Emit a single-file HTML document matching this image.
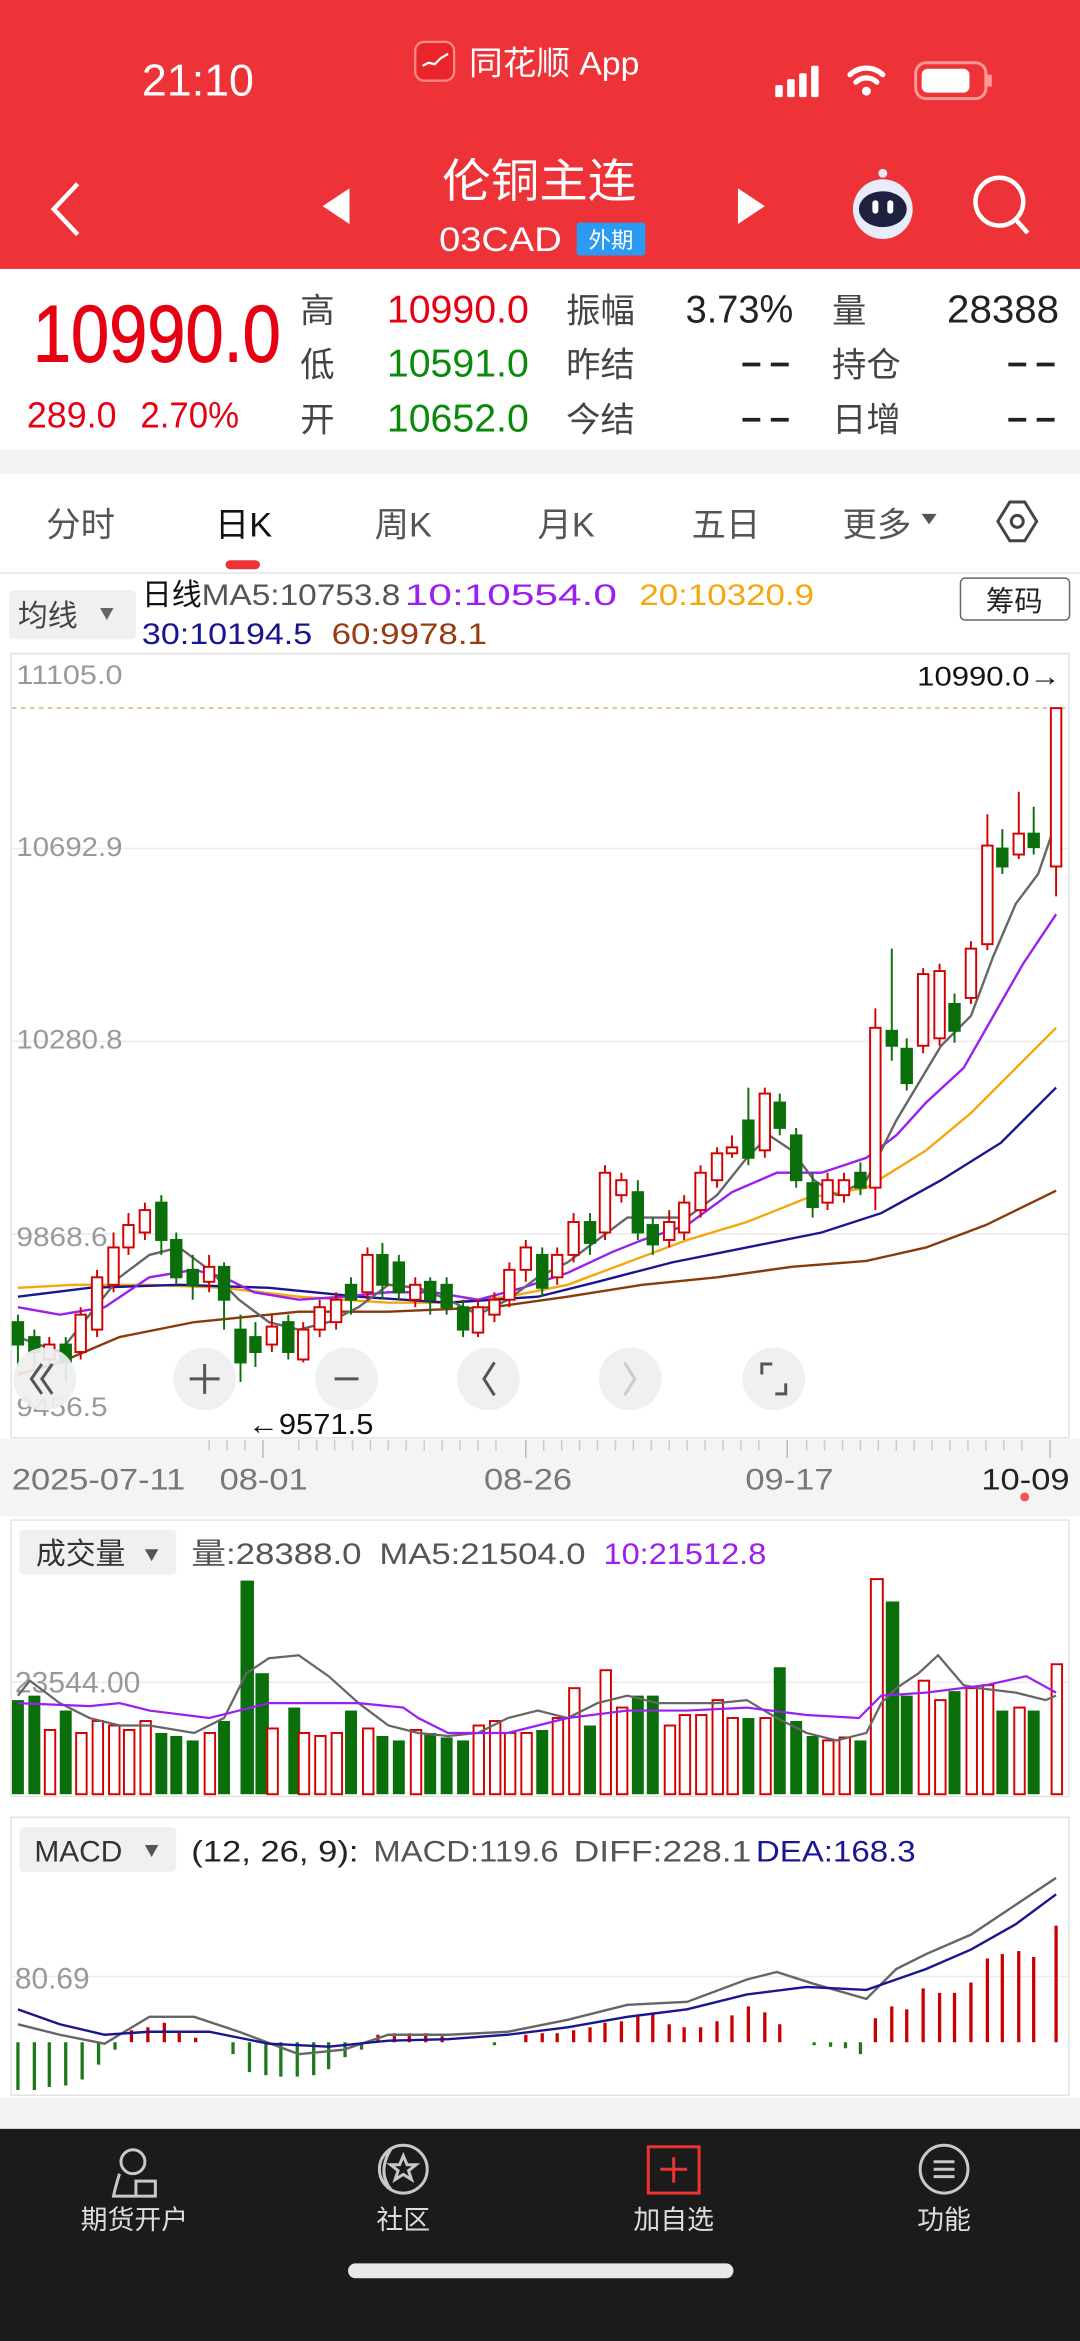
<!DOCTYPE html>
<html><head><meta charset="utf-8"><style>
html,body{margin:0;padding:0;background:#fff;}
svg{display:block}
text{font-family:"Liberation Sans","Noto Sans CJK SC",sans-serif;}
</style></head><body>
<svg width="1080" height="2341" viewBox="0 0 723 1567" preserveAspectRatio="none" xmlns="http://www.w3.org/2000/svg">
<!-- header -->
<rect x="0" y="0" width="723" height="180" fill="#ed3238"/>
<text x="95" y="64" font-size="30" fill="#fff" textLength="75" lengthAdjust="spacingAndGlyphs">21:10</text>
<rect x="278" y="28" width="26" height="26" rx="6" fill="#e8252b" stroke="#f88" stroke-width="1.5"/>
<path d="M283 44 l4 -2 l4 1 l4 -4 l5 -3" stroke="#fff" stroke-width="1.5" fill="none"/>
<text x="314" y="50" font-size="22" fill="#fff" textLength="114" lengthAdjust="spacingAndGlyphs">同花顺 App</text>
<g fill="#fff"><rect x="519" y="57" width="5" height="8" rx="1"/><rect x="527" y="53" width="5" height="12" rx="1"/><rect x="535" y="49" width="5" height="16" rx="1"/><rect x="543" y="44" width="5" height="21" rx="1"/></g>
<path d="M569 50 a16 16 0 0 1 22 0 M573 55 a10 10 0 0 1 14 0" stroke="#fff" stroke-width="3.5" fill="none" stroke-linecap="round"/><circle cx="580" cy="61" r="3" fill="#fff"/>
<rect x="613" y="42" width="47" height="24" rx="7" fill="none" stroke="#f99" stroke-width="2"/><rect x="617" y="46" width="32" height="16" rx="4" fill="#fff"/><rect x="661" y="50" width="3" height="8" fill="#f99"/>
<path d="M52 123 L36 140 L52 157" stroke="#fff" stroke-width="3" fill="none"/>
<path d="M234 126 L216 138 L234 150 Z" fill="#fff"/>
<path d="M494 126 L512 138 L494 150 Z" fill="#fff"/>
<text x="296" y="132" font-size="31" fill="#fff" textLength="130" lengthAdjust="spacingAndGlyphs">伦铜主连</text>
<text x="294" y="168" font-size="23" fill="#fff" textLength="82" lengthAdjust="spacingAndGlyphs">03CAD</text>
<rect x="386" y="149" width="46" height="22" rx="2" fill="#2b9af3"/>
<text x="409" y="166" font-size="15" fill="#fff" text-anchor="middle">外期</text>
<circle cx="591" cy="140" r="20" fill="#e8ecf8"/><ellipse cx="591" cy="140" rx="16" ry="12" fill="#1e2140"/><rect x="584" y="134" width="4" height="9" rx="2" fill="#fff"/><rect x="594" y="134" width="4" height="9" rx="2" fill="#fff"/><circle cx="591" cy="116" r="3" fill="#e8ecf8"/>
<circle cx="669" cy="135" r="16" stroke="#fff" stroke-width="3" fill="none"/><path d="M680 147 L688 156" stroke="#fff" stroke-width="3"/>
<!-- quote -->
<text x="22" y="242" font-size="54" fill="#e60012" textLength="166" lengthAdjust="spacingAndGlyphs" stroke="#e60012" stroke-width="0.6">10990.0</text>
<text x="18" y="286" font-size="24" fill="#e60012" textLength="60" lengthAdjust="spacingAndGlyphs">289.0</text>
<text x="94" y="286" font-size="24" fill="#e60012" textLength="66" lengthAdjust="spacingAndGlyphs">2.70%</text>
<g font-size="23" fill="#444">
<text x="201" y="216">高</text><text x="201" y="252">低</text><text x="201" y="289">开</text>
<text x="379" y="216">振幅</text><text x="379" y="252">昨结</text><text x="379" y="289">今结</text>
<text x="557" y="216">量</text><text x="557" y="252">持仓</text><text x="557" y="289">日增</text>
</g>
<g font-size="26" lengthAdjust="spacingAndGlyphs">
<text x="259" y="216" fill="#e60012" textLength="95" lengthAdjust="spacingAndGlyphs">10990.0</text><text x="259" y="252" fill="#0a8a0a" textLength="95" lengthAdjust="spacingAndGlyphs">10591.0</text><text x="259" y="289" fill="#0a8a0a" textLength="95" lengthAdjust="spacingAndGlyphs">10652.0</text>
<text x="459" y="216" fill="#222" textLength="72" lengthAdjust="spacingAndGlyphs">3.73%</text>
<text x="634" y="216" fill="#222" textLength="75" lengthAdjust="spacingAndGlyphs">28388</text>
</g>
<g stroke="#222" stroke-width="2.5"><path d="M497 244h12M516 244h12M497 281h12M516 281h12M675 244h12M694 244h12M675 281h12M694 281h12"/></g>
<rect x="0" y="301" width="723" height="16" fill="#f3f3f3"/>
<!-- tabs -->
<g font-size="23" fill="#555" text-anchor="middle">
<text x="54" y="359">分时</text><text x="163" y="359" fill="#111">日K</text><text x="270" y="359">周K</text><text x="379" y="359">月K</text><text x="486" y="359">五日</text><text x="587" y="359">更多</text>
</g>
<path d="M617 344 l10 0 l-5 7z" fill="#555"/>
<path d="M676 336 l10 0 l8 13 l-8 13 l-10 0 l-8 -13z" stroke="#444" stroke-width="2" fill="none"/><circle cx="681" cy="349" r="4" stroke="#444" stroke-width="2" fill="none"/>
<rect x="151" y="375" width="23" height="6" rx="3" fill="#ed3238"/>
<rect x="0" y="383" width="723" height="1" fill="#e6e6e6"/>
<!-- MA legend -->
<rect x="6" y="395" width="85" height="33" rx="3" fill="#f0f0f0"/>
<text x="12" y="419" font-size="20" fill="#444">均线</text><path d="M67 407 l9 0 l-4.5 8z" fill="#666"/>
<g font-size="20">
<text x="95" y="405" fill="#111">日线</text><text x="135" y="405" fill="#555" textLength="133" lengthAdjust="spacingAndGlyphs">MA5:10753.8</text><text x="271" y="405" fill="#9a1ff0" textLength="142" lengthAdjust="spacingAndGlyphs">10:10554.0</text><text x="428" y="405" fill="#f5a70c" textLength="117" lengthAdjust="spacingAndGlyphs">20:10320.9</text>
<text x="95" y="431" fill="#16148f" textLength="114" lengthAdjust="spacingAndGlyphs">30:10194.5</text><text x="222" y="431" fill="#9a3a10" textLength="104" lengthAdjust="spacingAndGlyphs">60:9978.1</text>
</g>
<rect x="643" y="387" width="73" height="28" rx="3" fill="#fff" stroke="#666"/><text x="679" y="409" font-size="19" fill="#222" text-anchor="middle">筹码</text>
<!-- chart frame -->
<rect x="7.5" y="437.5" width="708" height="525" fill="#fff" stroke="#e3e3e3"/>
<g stroke="#ececec"><line x1="8" y1="568" x2="715" y2="568"/><line x1="8" y1="697" x2="715" y2="697"/><line x1="8" y1="826" x2="715" y2="826"/></g>
<line x1="8" y1="474" x2="715" y2="474" stroke="#d9b27a" stroke-dasharray="3,3"/>
<g font-size="18" fill="#999"><text x="11" y="458" textLength="71" lengthAdjust="spacingAndGlyphs">11105.0</text><text x="11" y="573" textLength="71" lengthAdjust="spacingAndGlyphs">10692.9</text><text x="11" y="702" textLength="71" lengthAdjust="spacingAndGlyphs">10280.8</text><text x="11" y="834" textLength="61" lengthAdjust="spacingAndGlyphs">9868.6</text><text x="11" y="948" textLength="61" lengthAdjust="spacingAndGlyphs">9456.5</text></g>
<text x="614" y="459" font-size="18" fill="#111" textLength="96" lengthAdjust="spacingAndGlyphs">10990.0→</text>
<text x="166" y="960" font-size="19" fill="#111" textLength="84" lengthAdjust="spacingAndGlyphs">←9571.5</text>
<!-- MA lines -->
<g fill="none" stroke-width="1.6">
<polyline stroke="#8a3a0a" points="12,920 40,912 80,895 130,885 200,878 260,878 330,875 380,868 430,860 480,855 530,848 580,844 620,835 660,820 707,797"/>
<polyline stroke="#f5a70c" points="12,862 50,860 100,860 150,862 200,868 260,872 300,872 340,868 380,860 420,845 460,830 500,818 540,802 580,795 620,770 650,745 680,715 707,688"/>
<polyline stroke="#1a1590" points="12,868 60,862 120,860 180,862 240,868 300,872 360,868 400,858 450,845 500,835 550,825 590,812 630,790 670,765 707,728"/>
<polyline stroke="#9a1ff0" points="12,875 40,880 70,875 100,855 130,850 150,855 170,865 200,870 230,868 260,865 290,865 320,870 350,862 380,852 410,838 430,830 460,820 490,798 520,785 550,785 580,775 600,760 620,738 645,715 665,680 685,645 707,612"/>
<polyline stroke="#666" points="12,895 40,905 60,880 80,855 100,840 120,835 140,850 160,870 180,885 200,890 220,885 240,875 260,860 280,862 300,870 320,880 340,870 360,855 380,845 400,830 420,815 440,815 460,815 480,800 500,775 515,760 530,770 545,790 560,800 580,790 600,750 615,725 630,700 650,680 665,640 680,605 695,585 707,550"/>
</g>
<!-- green candles -->
<g fill="#0a6e0a" stroke="#0a6e0a" stroke-width="1.3">
<line x1="12" y1="880" x2="12" y2="915"/><rect x="8.5" y="885" width="7" height="15"/>
<line x1="23" y1="890" x2="23" y2="915"/><rect x="19.5" y="895" width="7" height="10"/>
<line x1="44" y1="895" x2="44" y2="925"/><rect x="40.5" y="900" width="7" height="12"/>
<line x1="108" y1="800" x2="108" y2="840"/><rect x="104.5" y="805" width="7" height="25"/>
<line x1="118" y1="825" x2="118" y2="860"/><rect x="114.5" y="830" width="7" height="25"/>
<line x1="129" y1="840" x2="129" y2="870"/><rect x="125.5" y="850" width="7" height="10"/>
<line x1="150" y1="845" x2="150" y2="890"/><rect x="146.5" y="848" width="7" height="22"/>
<line x1="161" y1="880" x2="161" y2="925"/><rect x="157.5" y="890" width="7" height="22"/>
<line x1="171" y1="885" x2="171" y2="915"/><rect x="167.5" y="895" width="7" height="10"/>
<line x1="193" y1="880" x2="193" y2="910"/><rect x="189.5" y="885" width="7" height="20"/>
<line x1="235" y1="855" x2="235" y2="880"/><rect x="231.5" y="860" width="7" height="10"/>
<line x1="256" y1="832" x2="256" y2="870"/><rect x="252.5" y="840" width="7" height="20"/>
<line x1="267" y1="840" x2="267" y2="870"/><rect x="263.5" y="845" width="7" height="20"/>
<line x1="288" y1="855" x2="288" y2="880"/><rect x="284.5" y="858" width="7" height="12"/>
<line x1="299" y1="855" x2="299" y2="880"/><rect x="295.5" y="860" width="7" height="15"/>
<line x1="310" y1="870" x2="310" y2="895"/><rect x="306.5" y="875" width="7" height="15"/>
<line x1="363" y1="835" x2="363" y2="868"/><rect x="359.5" y="840" width="7" height="22"/>
<line x1="395" y1="812" x2="395" y2="840"/><rect x="391.5" y="818" width="7" height="14"/>
<line x1="427" y1="790" x2="427" y2="830"/><rect x="423.5" y="798" width="7" height="27"/>
<line x1="437" y1="815" x2="437" y2="840"/><rect x="433.5" y="820" width="7" height="13"/>
<line x1="501" y1="728" x2="501" y2="780"/><rect x="497.5" y="750" width="7" height="25"/>
<line x1="522" y1="732" x2="522" y2="760"/><rect x="518.5" y="738" width="7" height="17"/>
<line x1="533" y1="755" x2="533" y2="795"/><rect x="529.5" y="760" width="7" height="30"/>
<line x1="544" y1="785" x2="544" y2="815"/><rect x="540.5" y="792" width="7" height="16"/>
<line x1="576" y1="778" x2="576" y2="800"/><rect x="572.5" y="785" width="7" height="10"/>
<line x1="597" y1="635" x2="597" y2="710"/><rect x="593.5" y="690" width="7" height="10"/>
<line x1="607" y1="695" x2="607" y2="730"/><rect x="603.5" y="702" width="7" height="23"/>
<line x1="639" y1="665" x2="639" y2="698"/><rect x="635.5" y="672" width="7" height="18"/>
<line x1="671" y1="555" x2="671" y2="585"/><rect x="667.5" y="568" width="7" height="12"/>
<line x1="692" y1="540" x2="692" y2="572"/><rect x="688.5" y="558" width="7" height="9"/>
</g>
<!-- red candles -->
<g fill="#fff" stroke="#d40000" stroke-width="1.3">
<line x1="33" y1="895" x2="33" y2="918"/><rect x="29.5" y="900" width="7" height="10"/>
<line x1="54" y1="875" x2="54" y2="910"/><rect x="50.5" y="880" width="7" height="25"/>
<line x1="65" y1="850" x2="65" y2="895"/><rect x="61.5" y="855" width="7" height="35"/>
<line x1="76" y1="825" x2="76" y2="865"/><rect x="72.5" y="835" width="7" height="25"/>
<line x1="86" y1="812" x2="86" y2="840"/><rect x="82.5" y="820" width="7" height="15"/>
<line x1="97" y1="805" x2="97" y2="830"/><rect x="93.5" y="810" width="7" height="15"/>
<line x1="140" y1="840" x2="140" y2="865"/><rect x="136.5" y="848" width="7" height="10"/>
<line x1="182" y1="880" x2="182" y2="905"/><rect x="178.5" y="888" width="7" height="12"/>
<line x1="203" y1="885" x2="203" y2="912"/><rect x="199.5" y="890" width="7" height="20"/>
<line x1="214" y1="870" x2="214" y2="895"/><rect x="210.5" y="875" width="7" height="15"/>
<line x1="225" y1="865" x2="225" y2="890"/><rect x="221.5" y="870" width="7" height="15"/>
<line x1="246" y1="835" x2="246" y2="870"/><rect x="242.5" y="840" width="7" height="25"/>
<line x1="278" y1="855" x2="278" y2="875"/><rect x="274.5" y="860" width="7" height="10"/>
<line x1="320" y1="870" x2="320" y2="895"/><rect x="316.5" y="875" width="7" height="17"/>
<line x1="331" y1="865" x2="331" y2="885"/><rect x="327.5" y="870" width="7" height="10"/>
<line x1="341" y1="845" x2="341" y2="875"/><rect x="337.5" y="850" width="7" height="20"/>
<line x1="352" y1="830" x2="352" y2="858"/><rect x="348.5" y="835" width="7" height="15"/>
<line x1="373" y1="835" x2="373" y2="860"/><rect x="369.5" y="840" width="7" height="15"/>
<line x1="384" y1="812" x2="384" y2="845"/><rect x="380.5" y="818" width="7" height="22"/>
<line x1="405" y1="780" x2="405" y2="830"/><rect x="401.5" y="785" width="7" height="40"/>
<line x1="416" y1="785" x2="416" y2="805"/><rect x="412.5" y="790" width="7" height="10"/>
<line x1="448" y1="810" x2="448" y2="835"/><rect x="444.5" y="818" width="7" height="12"/>
<line x1="458" y1="800" x2="458" y2="830"/><rect x="454.5" y="805" width="7" height="20"/>
<line x1="469" y1="780" x2="469" y2="815"/><rect x="465.5" y="785" width="7" height="25"/>
<line x1="480" y1="768" x2="480" y2="795"/><rect x="476.5" y="772" width="7" height="18"/>
<line x1="490" y1="760" x2="490" y2="775"/><rect x="486.5" y="768" width="7" height="4"/>
<line x1="512" y1="728" x2="512" y2="775"/><rect x="508.5" y="732" width="7" height="38"/>
<line x1="554" y1="785" x2="554" y2="810"/><rect x="550.5" y="790" width="7" height="15"/>
<line x1="565" y1="785" x2="565" y2="805"/><rect x="561.5" y="790" width="7" height="10"/>
<line x1="586" y1="675" x2="586" y2="810"/><rect x="582.5" y="688" width="7" height="107"/>
<line x1="618" y1="648" x2="618" y2="705"/><rect x="614.5" y="652" width="7" height="48"/>
<line x1="629" y1="645" x2="629" y2="700"/><rect x="625.5" y="650" width="7" height="45"/>
<line x1="650" y1="630" x2="650" y2="672"/><rect x="646.5" y="635" width="7" height="33"/>
<line x1="661" y1="545" x2="661" y2="636"/><rect x="657.5" y="566" width="7" height="66"/>
<line x1="682" y1="530" x2="682" y2="575"/><rect x="678.5" y="558" width="7" height="14"/>
<line x1="707" y1="474" x2="707" y2="600"/><rect x="703.5" y="474" width="7" height="106"/>
</g>
<!-- zoom controls -->
<g fill="#efefef" opacity="0.92"><circle cx="30" cy="923" r="21"/><circle cx="137" cy="923" r="21"/><circle cx="232" cy="923" r="21"/><circle cx="327" cy="923" r="21"/><circle cx="422" cy="923" r="21"/><circle cx="518" cy="923" r="21"/></g>
<g stroke="#555" stroke-width="2" fill="none">
<path d="M28 913 l-7 10 l7 10 M35 913 l-7 10 l7 10"/>
<path d="M127 923 h20 M137 913 v20"/><path d="M224 923 h16"/><path d="M331 912 l-7 11 l7 11"/>
<path d="M418 912 l7 11 l-7 11" stroke="#ccc"/><path d="M510 920 v-7 h7 M526 926 v7 h-7"/>
</g>
<!-- x axis -->
<rect x="0" y="963" width="723" height="52" fill="#f4f4f4"/>
<g stroke="#bbb"><line x1="176" y1="964" x2="176" y2="976"/><line x1="352" y1="964" x2="352" y2="976"/><line x1="527" y1="964" x2="527" y2="976"/><line x1="703" y1="964" x2="703" y2="976"/></g>
<g stroke="#ccc"><path d="M200 964v7M212 964v7M224 964v7M236 964v7M248 964v7M260 964v7M272 964v7M284 964v7M296 964v7M308 964v7M320 964v7M332 964v7M364 964v7M376 964v7M388 964v7M400 964v7M412 964v7M424 964v7M436 964v7M448 964v7M460 964v7M472 964v7M484 964v7M496 964v7M508 964v7M540 964v7M552 964v7M564 964v7M576 964v7M588 964v7M600 964v7M612 964v7M624 964v7M636 964v7M648 964v7M660 964v7M672 964v7M684 964v7M140 964v7M152 964v7M164 964v7"/></g>
<g font-size="20" fill="#777" lengthAdjust="spacingAndGlyphs"><text x="8" y="997" textLength="116" lengthAdjust="spacingAndGlyphs">2025-07-11</text><text x="147" y="997" textLength="59" lengthAdjust="spacingAndGlyphs">08-01</text><text x="324" y="997" textLength="59" lengthAdjust="spacingAndGlyphs">08-26</text><text x="499" y="997" textLength="59" lengthAdjust="spacingAndGlyphs">09-17</text><text x="657" y="997" fill="#222" textLength="59" lengthAdjust="spacingAndGlyphs">10-09</text></g>
<circle cx="686" cy="1002" r="3" fill="#f25555"/>
<!-- volume panel -->
<rect x="7.5" y="1017.5" width="708" height="185" fill="#fff" stroke="#e3e3e3"/>
<rect x="13" y="1024" width="105" height="30" rx="3" fill="#f0f0f0"/>
<text x="24" y="1047" font-size="20" fill="#333">成交量</text><path d="M97 1037 l9 0 l-4.5 8z" fill="#555"/>
<g font-size="20"><text x="128" y="1047" fill="#555" textLength="114" lengthAdjust="spacingAndGlyphs">量:28388.0</text><text x="254" y="1047" fill="#555" textLength="138" lengthAdjust="spacingAndGlyphs">MA5:21504.0</text><text x="404" y="1047" fill="#9a1ff0" textLength="109" lengthAdjust="spacingAndGlyphs">10:21512.8</text></g>
<line x1="8" y1="1126" x2="715" y2="1126" stroke="#ececec"/>
<text x="10" y="1133" font-size="20" fill="#999" textLength="84" lengthAdjust="spacingAndGlyphs">23544.00</text>
<g fill="#0a6e0a">
<rect x="8" y="1138" width="8" height="63"/><rect x="19" y="1135" width="8" height="66"/><rect x="40" y="1145" width="8" height="56"/><rect x="104" y="1160" width="8" height="41"/><rect x="114" y="1162" width="8" height="39"/><rect x="125" y="1165" width="8" height="36"/><rect x="146" y="1152" width="8" height="49"/><rect x="161" y="1058" width="9" height="143"/><rect x="171" y="1120" width="9" height="81"/><rect x="193" y="1143" width="8" height="58"/><rect x="231" y="1145" width="8" height="56"/><rect x="252" y="1162" width="8" height="39"/><rect x="263" y="1165" width="8" height="36"/><rect x="284" y="1160" width="8" height="41"/><rect x="295" y="1163" width="8" height="38"/><rect x="306" y="1165" width="8" height="36"/><rect x="359" y="1158" width="8" height="43"/><rect x="391" y="1155" width="8" height="46"/><rect x="423" y="1135" width="8" height="66"/><rect x="433" y="1135" width="8" height="66"/><rect x="497" y="1150" width="8" height="51"/><rect x="518" y="1116" width="8" height="85"/><rect x="529" y="1152" width="8" height="49"/><rect x="540" y="1162" width="8" height="39"/><rect x="572" y="1165" width="8" height="36"/><rect x="593" y="1072" width="9" height="129"/><rect x="603" y="1135" width="8" height="66"/><rect x="635" y="1132" width="8" height="69"/><rect x="667" y="1145" width="8" height="56"/><rect x="688" y="1145" width="8" height="56"/>
</g>
<g fill="#fff" stroke="#d40000" stroke-width="1.3">
<rect x="30" y="1158" width="7" height="43"/><rect x="51" y="1160" width="7" height="41"/><rect x="62" y="1152" width="7" height="49"/><rect x="73" y="1155" width="7" height="46"/><rect x="83" y="1158" width="7" height="43"/><rect x="94" y="1152" width="7" height="49"/><rect x="137" y="1160" width="7" height="41"/><rect x="179" y="1157" width="7" height="44"/><rect x="200" y="1160" width="7" height="41"/><rect x="211" y="1162" width="7" height="39"/><rect x="222" y="1160" width="7" height="41"/><rect x="243" y="1157" width="7" height="44"/><rect x="275" y="1158" width="7" height="43"/><rect x="317" y="1155" width="7" height="46"/><rect x="328" y="1152" width="7" height="49"/><rect x="338" y="1160" width="7" height="41"/><rect x="349" y="1160" width="7" height="41"/><rect x="370" y="1150" width="7" height="51"/><rect x="381" y="1130" width="7" height="71"/><rect x="402" y="1118" width="7" height="83"/><rect x="413" y="1143" width="7" height="58"/><rect x="445" y="1155" width="7" height="46"/><rect x="455" y="1148" width="7" height="53"/><rect x="466" y="1148" width="7" height="53"/><rect x="477" y="1138" width="7" height="63"/><rect x="487" y="1150" width="7" height="51"/><rect x="509" y="1150" width="7" height="51"/><rect x="551" y="1165" width="7" height="36"/><rect x="562" y="1163" width="7" height="38"/><rect x="583" y="1057" width="8" height="144"/><rect x="615" y="1125" width="7" height="76"/><rect x="626" y="1138" width="7" height="63"/><rect x="647" y="1130" width="7" height="71"/><rect x="658" y="1128" width="7" height="73"/><rect x="679" y="1143" width="7" height="58"/><rect x="704" y="1114" width="7" height="87"/>
</g>
<g fill="none" stroke-width="1.5">
<polyline stroke="#666" points="12,1135 20,1125 40,1140 60,1150 80,1155 100,1155 130,1160 150,1150 165,1120 180,1110 200,1108 220,1122 240,1140 260,1155 280,1160 300,1162 320,1160 340,1150 360,1145 380,1150 400,1140 420,1135 440,1140 460,1140 480,1140 500,1138 520,1150 540,1160 560,1165 580,1160 590,1140 600,1130 615,1120 628,1108 645,1128 655,1130 680,1133 700,1138 707,1135"/>
<polyline stroke="#9a1ff0" points="12,1140 60,1142 80,1140 100,1145 140,1150 160,1145 180,1140 240,1140 270,1143 280,1150 300,1160 340,1160 380,1150 420,1145 460,1145 500,1143 540,1148 575,1150 590,1135 620,1133 660,1128 687,1122 707,1133"/>
</g>
<!-- MACD panel -->
<rect x="7.5" y="1216.5" width="708" height="186" fill="#fff" stroke="#e3e3e3"/>
<rect x="13" y="1223" width="105" height="30" rx="3" fill="#f0f0f0"/>
<text x="23" y="1246" font-size="20" fill="#333">MACD</text><path d="M97 1235 l9 0 l-4.5 8z" fill="#555"/>
<g font-size="20"><text x="128" y="1246" fill="#222" textLength="112" lengthAdjust="spacingAndGlyphs">(12, 26, 9):</text><text x="250" y="1246" fill="#555" textLength="124" lengthAdjust="spacingAndGlyphs">MACD:119.6</text><text x="384" y="1246" fill="#555" textLength="119" lengthAdjust="spacingAndGlyphs">DIFF:228.1</text><text x="506" y="1246" fill="#1a1590" textLength="107" lengthAdjust="spacingAndGlyphs">DEA:168.3</text></g>
<line x1="8" y1="1323" x2="715" y2="1323" stroke="#ececec"/>
<text x="10" y="1331" font-size="20" fill="#999" textLength="50" lengthAdjust="spacingAndGlyphs">80.69</text>
<g stroke="#1a7a1a" stroke-width="2.2">
<path d="M12 1367v32M23 1367v32M33 1367v30M44 1367v29M55 1367v25M66 1367v15M77 1367v5M156 1367v8M167 1367v20M178 1367v22M188 1367v23M199 1367v23M210 1367v22M220 1367v18M231 1367v10M242 1367v5M331 1367v2M545 1367v2M556 1367v3M566 1367v4M576 1367v8"/>
</g>
<g stroke="#c80000" stroke-width="2.2">
<path d="M88 1367v-8M99 1367v-10M110 1367v-13M120 1367v-7M131 1367v-3M253 1367v-5M264 1367v-6M274 1367v-6M285 1367v-6M296 1367v-4M352 1367v-5M363 1367v-6M373 1367v-6M384 1367v-8M395 1367v-10M405 1367v-13M416 1367v-14M427 1367v-18M437 1367v-20M448 1367v-12M458 1367v-10M469 1367v-10M480 1367v-14M490 1367v-18M501 1367v-24M512 1367v-20M522 1367v-12M586 1367v-16M597 1367v-24M607 1367v-22M618 1367v-36M629 1367v-33M639 1367v-33M650 1367v-40M661 1367v-56M671 1367v-59M682 1367v-61M692 1367v-57M707 1367v-78"/>
</g>
<g fill="none" stroke-width="1.6">
<polyline stroke="#666" points="12,1355 40,1362 70,1368 100,1350 130,1350 160,1360 200,1375 230,1372 260,1362 300,1362 340,1360 380,1352 420,1342 460,1340 500,1325 520,1320 545,1328 580,1338 600,1318 620,1308 650,1295 680,1275 707,1257"/>
<polyline stroke="#1a1590" points="12,1345 40,1355 70,1362 100,1360 140,1360 180,1368 220,1370 260,1366 300,1365 340,1362 380,1357 420,1350 460,1345 500,1335 540,1330 580,1332 620,1318 650,1305 680,1288 707,1268"/>
</g>
<rect x="0" y="1404" width="723" height="21" fill="#f3f3f3"/>
<!-- bottom nav -->
<rect x="0" y="1425" width="723" height="142" fill="#1b1b1b"/>
<g stroke="#c8c8c8" stroke-width="2" fill="none">
<circle cx="89" cy="1447" r="8"/><path d="M80 1455 q-3 10 -4 15 h14 M91 1460 h13 v10 h-13z"/>
<circle cx="270" cy="1452" r="16"/><path d="M262 1466 q-10 -12 0 -28" /><path d="M270 1443 l2.5 6 h6 l-5 4 l2 6 l-5.5 -3.5 l-5.5 3.5 l2 -6 l-5 -4 h6z"/>
<circle cx="632" cy="1452" r="16"/><path d="M625 1447 h14 M625 1452 h14 M625 1457 h14"/>
</g>
<rect x="434" y="1437" width="34" height="31" fill="none" stroke="#e33" stroke-width="2"/><path d="M451 1444 v17 M442 1452 h18" stroke="#e33" stroke-width="2"/>
<g font-size="18" fill="#ddd" text-anchor="middle"><text x="90" y="1492">期货开户</text><text x="270" y="1492">社区</text><text x="451" y="1492">加自选</text><text x="632" y="1492">功能</text></g>
<rect x="233" y="1515" width="258" height="10" rx="5" fill="#e8e8e8"/>
</svg>
</body></html>
